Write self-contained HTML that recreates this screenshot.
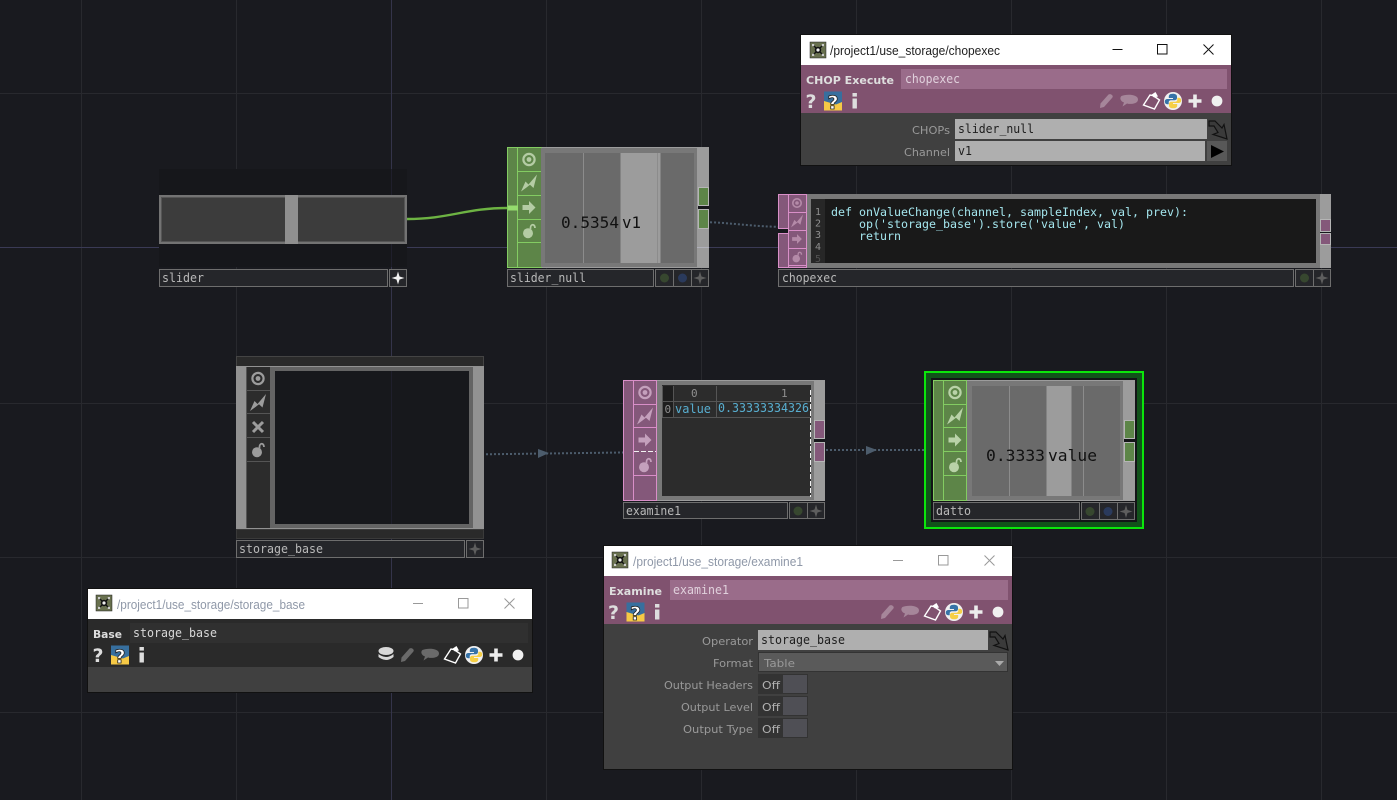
<!DOCTYPE html>
<html>
<head>
<meta charset="utf-8">
<title>use_storage</title>
<style>
html,body{margin:0;padding:0;background:#191a1f;overflow:hidden}
svg{display:block}
text{white-space:pre}
.m{font-family:"DejaVu Sans Mono","Liberation Mono",monospace;font-size:12px}
.s{font-family:"DejaVu Sans","Liberation Sans",sans-serif;font-size:11px}
.t{font-family:"Liberation Sans",sans-serif;font-size:13px}
.n{fill:#b9b9b9}
.nb{fill:#25262a;stroke:#6e6e6e;stroke-width:1}
.l{fill:#999}
.k{fill:#1d1d1d}
.code{fill:#a4e6ee;font-family:"DejaVu Sans Mono","Liberation Mono",monospace;font-size:11.5px}
.ln{fill:#8f8f8f;font-family:"DejaVu Sans Mono","Liberation Mono",monospace;font-size:10px}
.big{fill:#111;font-family:"DejaVu Sans Mono","Liberation Mono",monospace;font-size:16px}
.b{font-family:"DejaVu Sans","Liberation Sans",sans-serif;font-size:11px;font-weight:bold;fill:#dedede}
.q{font-family:"DejaVu Sans","Liberation Sans",sans-serif;font-size:19px;font-weight:bold;fill:#ddd;text-anchor:middle}
</style>
</head>
<body>
<svg xmlns="http://www.w3.org/2000/svg" width="1397" height="800" viewBox="0 0 1397 800">
<defs>
<g id="target"><circle r="5.6" fill="none" stroke="currentColor" stroke-width="2.2"/><circle r="2.4" fill="currentColor"/></g>
<path id="bolt" fill="currentColor" d="M-8 8.5 L-3.5 -1.5 L-0.5 1.5 L8 -8.5 L4.5 5 L1 1.8 L-2.5 4.5 Z"/>
<path id="arrow" fill="currentColor" d="M-6.5 -2.5 H0 V-6.5 L6.5 0 L0 6.5 V2.5 H-6.5 Z"/>
<g id="bomb"><circle cx="-1" cy="2.2" r="5" fill="currentColor"/><path d="M1.5 -2 C1 -7.5 6 -7.5 6 -3" fill="none" stroke="currentColor" stroke-width="1.8"/></g>
<path id="x" d="M-5 -5 L5 5 M5 -5 L-5 5" fill="none" stroke="currentColor" stroke-width="3"/>
<path id="star" fill="currentColor" d="M0 -6.5 L1.5 -1.5 L6.5 0 L1.5 1.5 L0 6.5 L-1.5 1.5 L-6.5 0 L-1.500 -1.5 Z"/>
<g id="tools">
<path d="M-7 7 L-6.500 2.500 L1.500 -6.500 Q3.500 -7.500 5 -6 Q6.500 -4.500 5 -3 L-3 6 Z" fill="#fff" opacity=".3"/>
<path d="M14.500 -5 C19 -7 31 -7 31 -1.500 C31 3 23 3.500 20 2.500 L15.500 5.500 L17 1.500 C13 0 12.500 -3.500 14.500 -5Z" fill="#fff" opacity=".3"/>
<path d="M36.500 4 L43 -6 L46 -5.500 L52.500 -1 L47.500 8 Z" fill="none" stroke="#fff" stroke-width="1.400"/>
<path d="M44 -6 L48.500 -9 L51 -4.500 L47 -3.500 Z" fill="#fff"/>
<circle cx="66" r="9" fill="#f0f0f0"/>
<path id="py1" d="M65.800 -7.300 C62.500 -7.300 61.800 -5.800 61.800 -4.500 V-3 H66 V-2 H60.500 C58.600 -2 57.800 -0.800 57.800 0.500 C57.800 2 58.600 3.200 60.200 3.200 H61.700 V1.200 C61.700 -0.200 62.800 -0.800 64 -0.800 H67.700 C69 -0.800 70 -1.700 70 -3 V-4.500 C70 -6.200 68.700 -7.300 65.800 -7.300Z" fill="#3673a8"/>
<path d="M65.800 -7.300 C62.500 -7.300 61.800 -5.800 61.800 -4.500 V-3 H66 V-2 H60.500 C58.600 -2 57.800 -0.800 57.800 0.500 C57.800 2 58.600 3.200 60.200 3.200 H61.700 V1.200 C61.700 -0.200 62.800 -0.800 64 -0.800 H67.700 C69 -0.800 70 -1.700 70 -3 V-4.500 C70 -6.200 68.700 -7.300 65.800 -7.300Z" fill="#f6cf45" transform="rotate(180 66 0)"/>
<path d="M81.500 0 H94.500 M88 -6.500 V6.500" stroke="#ececec" stroke-width="3.600"/>
<circle cx="110" r="5.400" fill="#f0f0f0"/>
</g>
<g id="left">
<text class="q" x="0" y="7">?</text>
<rect x="13" y="-9.500" width="18" height="19" fill="#f6c945"/>
<path d="M13 -9.500 H31 V1 L25 3.500 L13 0 Z" fill="#376f9e"/>
<text x="22" y="8" text-anchor="middle" style="font-family:'DejaVu Sans',sans-serif;font-size:19px;font-weight:bold;fill:#fff;stroke:#222;stroke-width:.8">?</text>
<rect x="41.500" y="-2.500" width="4.400" height="10" fill="#ddd"/><rect x="41.500" y="-8" width="4.400" height="3.600" fill="#ddd"/>
</g>
<g id="logo">
<rect width="16" height="16" fill="#68704e" stroke="#222" stroke-width=".5"/>
<path d="M3 3 L13 13 M13 3 L3 13" stroke="#111" stroke-width="1.300"/>
<circle cx="8" cy="8" r="3.200" fill="#111"/><circle cx="8" cy="8" r="1.600" fill="#eee"/>
<rect x="2" y="2" width="2.200" height="2.200" fill="#ccc"/><rect x="11.800" y="2" width="2.200" height="2.200" fill="#ccc"/><rect x="2" y="11.800" width="2.200" height="2.200" fill="#ccc"/><rect x="11.800" y="11.800" width="2.200" height="2.200" fill="#ccc"/>
</g>
<g id="plug"><path d="M1 1 H7 L9 3 L14 8 L16 4.500 L19 19 L5 14.500 L10 12.500 L6 6 H1 Z" fill="#3a3a3a" stroke="#111" stroke-width="1.200"/></g>
<clipPath id="cc"><rect x="811" y="199" width="505" height="64"/></clipPath>
</defs>

<!-- background -->
<rect width="1397" height="800" fill="#191a1f"/>
<g stroke="#28292e" stroke-width="1">
<path d="M81.500 0V800M236.500 0V800M546.500 0V800M701.500 0V800M856.500 0V800M1011.500 0V800M1166.500 0V800M1321.500 0V800"/>
<path d="M0 93.500H1397M0 403.500H1397M0 557.500H1397M0 712.500H1397"/>
</g>
<path d="M391.500 0V800" stroke="#34344a"/>
<path d="M0 247.500H1397" stroke="#3a3a55"/>

<!-- wires -->
<path d="M407 219 C450 219 465 208 508 208" fill="none" stroke="#6db343" stroke-width="2.400"/>
<g fill="none" stroke="#4c5c6c" stroke-width="2" stroke-dasharray="2 2">
<path d="M698 222 C730 222 750 227 790 227"/>
<path d="M470 454.500 L660 452"/>
<path d="M826 450 H970"/>
</g>
<path d="M538 449 L549 453 L538 458 Z" fill="#4c5c6c"/>
<path d="M866 446 L877 450 L866 455 Z" fill="#4c5c6c"/>

<!-- slider -->
<rect x="159" y="169" width="248" height="98" fill="#16171b"/>
<path d="M391.500 169V195M391.500 244V267" stroke="#1f1f2c"/>
<rect x="160" y="196" width="246" height="47" fill="#3c3c3c" stroke="#737373" stroke-width="2"/>
<rect x="161.500" y="197.500" width="243" height="44" fill="none" stroke="#555"/>
<rect x="285" y="195" width="13" height="49" fill="#8f8f8f"/>
<rect class="nb" x="159.500" y="269.500" width="228" height="17"/>
<rect class="nb" x="389.500" y="269.500" width="17" height="17"/>
<text class="m n" x="162" y="282" textLength="42" lengthAdjust="spacingAndGlyphs">slider</text>
<use href="#star" x="398" y="278" color="#f2f2f2"/>

<!-- slider_null -->
<rect x="507" y="147" width="202" height="121" fill="#9c9c9c"/>
<rect x="507.500" y="147.500" width="34" height="120" fill="#5d8548" stroke="#83cc62"/>
<path d="M517.500 147V268M518 171.500H541M518 195.500H541M518 219.500H541M518 242.500H541" stroke="#83cc62"/>
<rect x="541" y="148" width="156" height="119" fill="#787878"/>
<rect x="545" y="153" width="149" height="110" fill="#6a6a6a"/>
<rect x="620.500" y="153" width="40" height="110" fill="#9c9c9c"/>
<path d="M583.500 153V263M657.500 153V263" stroke="#8c8c8c"/>
<rect x="508" y="205.500" width="10" height="5" fill="#95dc6e"/>
<g color="#b4cca4"><use href="#target" x="529" y="159.500"/><use href="#bolt" x="529" y="183"/><use href="#arrow" x="529" y="207.500"/><use href="#bomb" x="529" y="231"/></g>
<text class="big" x="561" y="228" textLength="58" lengthAdjust="spacingAndGlyphs">0.5354</text>
<text class="big" x="622" y="228" textLength="19" lengthAdjust="spacingAndGlyphs">v1</text>
<rect x="698.500" y="187.500" width="10" height="18" fill="#5d8548" stroke="#b5b5b5"/>
<rect x="698" y="206" width="11" height="3" fill="#17181c"/>
<rect x="698.500" y="209.500" width="10" height="19" fill="#5d8548" stroke="#b5b5b5"/>
<rect x="697" y="247" width="12" height="1" fill="#c4c4d8" opacity=".5"/>
<rect class="nb" x="507.500" y="269.500" width="146" height="17"/>
<rect class="nb" x="655.500" y="269.500" width="53" height="17"/>
<path d="M673.500 270V287M691.500 270V287" stroke="#6e6e6e"/>
<text class="m n" x="510" y="282" textLength="76" lengthAdjust="spacingAndGlyphs">slider_null</text>
<circle cx="664.500" cy="278" r="4.500" fill="#37472f"/><circle cx="682.500" cy="278" r="4.500" fill="#2a3a5c"/>
<use href="#star" x="700" y="278" color="#5e5e5e"/>

<!-- chopexec node -->
<rect x="778" y="194" width="553" height="74" fill="#9c9c9c"/>
<rect x="778.500" y="194.500" width="28" height="73" fill="#84587a" stroke="#d98fc8"/>
<path d="M788.500 194V268M789 212.500H806M789 230.500H806M789 248.500H806M789 265.500H806" stroke="#d98fc8"/>
<rect x="778" y="229" width="10" height="4" fill="#17181c"/>
<path d="M778 228.500H788.500M778 233.500H788.500" stroke="#d98fc8"/>
<rect x="807" y="194" width="513" height="74" fill="#787878"/>
<rect x="811" y="199" width="505" height="64" fill="#191919"/>
<rect x="811" y="199" width="14" height="64" fill="#272727"/>
<g color="#b48aa8"><use href="#target" transform="translate(797 203) scale(.75)"/><use href="#bolt" transform="translate(797 221) scale(.75)"/><use href="#arrow" transform="translate(797 239) scale(.75)"/><use href="#bomb" transform="translate(797 257) scale(.75)"/></g>
<g clip-path="url(#cc)">
<text class="ln" x="815" y="215">1</text><text class="ln" x="815" y="226.500">2</text><text class="ln" x="815" y="238">3</text><text class="ln" x="815" y="250">4</text><text class="ln" x="815" y="262" opacity=".4">5</text>
<text class="code" x="831" y="216" textLength="357" lengthAdjust="spacingAndGlyphs">def onValueChange(channel, sampleIndex, val, prev):</text>
<text class="code" x="859" y="228" textLength="266" lengthAdjust="spacingAndGlyphs">op('storage_base').store('value', val)</text>
<text class="code" x="859" y="240" textLength="42" lengthAdjust="spacingAndGlyphs">return</text>
</g>
<rect x="1320.500" y="219.500" width="10" height="12" fill="#84587a" stroke="#b5b5b5"/>
<rect x="1320" y="232" width="11" height="2" fill="#17181c"/>
<rect x="1320.500" y="233.500" width="10" height="11" fill="#84587a" stroke="#b5b5b5"/>
<rect class="nb" x="778.500" y="269.500" width="515" height="17"/>
<rect class="nb" x="1295.500" y="269.500" width="35" height="17"/>
<path d="M1313.500 270V287" stroke="#6e6e6e"/>
<text class="m n" x="782" y="282" textLength="55" lengthAdjust="spacingAndGlyphs">chopexec</text>
<circle cx="1304.500" cy="278" r="4.500" fill="#37472f"/>
<use href="#star" x="1322" y="278" color="#5e5e5e"/>

<!-- storage_base -->
<rect x="236.500" y="356.500" width="247" height="10" fill="#2a2a2a" stroke="#444"/>
<rect x="236" y="366" width="248" height="163" fill="#929292"/>
<rect x="246" y="367" width="24" height="161" fill="#2c2c2c"/>
<path d="M246.500 367V528M247 390.500H270M247 413.500H270M247 437.500H270M247 461.500H270" stroke="#555"/>
<rect x="270" y="367" width="203" height="161" fill="#646464"/>
<rect x="275" y="371" width="194" height="153" fill="#17181c"/>
<path d="M391.500 371V524" stroke="#1f1f2c"/>
<g color="#9c9c9c"><use href="#target" x="258" y="378.500"/><use href="#bolt" x="258" y="402.500"/><use href="#x" x="258" y="427"/><use href="#bomb" x="258" y="450"/></g>
<rect x="236.500" y="529.500" width="247" height="9" fill="#2a2a2a" stroke="#3a3a3a"/>
<rect class="nb" x="236.500" y="540.500" width="228" height="17"/>
<rect class="nb" x="466.500" y="540.500" width="17" height="17"/>
<text class="m n" x="239" y="553" textLength="84" lengthAdjust="spacingAndGlyphs">storage_base</text>
<use href="#star" x="475" y="549" color="#5e5e5e"/>

<!-- examine1 -->
<rect x="623" y="380" width="202" height="121" fill="#9c9c9c"/>
<rect x="623.500" y="380.500" width="33" height="120" fill="#84587a" stroke="#d98fc8"/>
<path d="M633.500 380V501M634 404.500H656M634 427.500H656M634 475.500H656" stroke="#d98fc8"/>
<rect x="657" y="381" width="157" height="119" fill="#787878"/>
<rect x="662" y="385" width="149" height="111" fill="#2c2c2c"/>
<rect x="662.500" y="386" width="11" height="15" fill="#1e1e1e"/>
<rect x="662.500" y="402" width="11" height="15" fill="#1e1e1e"/>
<path d="M662 401.500H811M662 417.500H811M662.500 386V417M673.500 386V417M716.500 386V417" stroke="#555"/>
<g color="#c4a0bc"><use href="#target" x="645" y="392.500"/><use href="#bolt" x="645" y="416"/><use href="#arrow" x="645" y="440"/><use href="#bomb" x="645" y="465"/></g>
<text class="ln" x="691" y="397" style="font-size:11px" fill="#aaa">0</text>
<text class="ln" x="781" y="397" style="font-size:11px" fill="#aaa">1</text>
<text class="ln" x="664.500" y="413" style="font-size:11px" fill="#aaa">0</text>
<text class="m" x="675" y="413" fill="#58aed0" textLength="36" lengthAdjust="spacingAndGlyphs">value</text>
<text class="m" x="718" y="412" fill="#58aed0" textLength="91" lengthAdjust="spacingAndGlyphs">0.33333334326</text>
<path d="M810.500 390V497M634 451.500H656" stroke="#f2f2f2" stroke-dasharray="5 2" fill="none"/>
<rect x="814.500" y="420.500" width="10" height="18" fill="#84587a" stroke="#b5b5b5"/>
<rect x="814" y="439" width="11" height="3" fill="#17181c"/>
<rect x="814.500" y="442.500" width="10" height="19" fill="#84587a" stroke="#b5b5b5"/>
<rect class="nb" x="623.500" y="502.500" width="164" height="16"/>
<rect class="nb" x="789.500" y="502.500" width="35" height="16"/>
<path d="M807.500 503V519" stroke="#6e6e6e"/>
<text class="m n" x="626" y="515" textLength="55" lengthAdjust="spacingAndGlyphs">examine1</text>
<circle cx="798" cy="511" r="4.500" fill="#37472f"/>
<use href="#star" x="816" y="511" color="#5e5e5e"/>

<!-- datto -->
<rect x="925" y="372" width="218" height="156" fill="#11521a" stroke="#0be50b" stroke-width="2"/>
<rect x="931" y="378" width="206" height="144" fill="#131417"/>
<rect x="933" y="380" width="202" height="121" fill="#9c9c9c"/>
<rect x="933.500" y="380.500" width="33" height="120" fill="#5d8548" stroke="#83cc62"/>
<path d="M943.500 380V501M944 404.500H967M944 427.500H967M944 451.500H967M944 475.500H967" stroke="#83cc62"/>
<rect x="967" y="381" width="156" height="119" fill="#787878"/>
<rect x="972" y="386" width="148" height="110" fill="#6a6a6a"/>
<rect x="1046.500" y="386" width="25" height="110" fill="#9c9c9c"/>
<path d="M1009.500 386V496M1083.500 386V496" stroke="#8c8c8c"/>
<g color="#b9d2a8"><use href="#target" x="955" y="392.500"/><use href="#bolt" x="955" y="416"/><use href="#arrow" x="955" y="440"/><use href="#bomb" x="955" y="465"/></g>
<text class="big" x="986" y="461" textLength="59" lengthAdjust="spacingAndGlyphs">0.3333</text>
<text class="big" x="1048" y="461" textLength="49" lengthAdjust="spacingAndGlyphs">value</text>
<rect x="1124.500" y="420.500" width="10" height="18" fill="#5d8548" stroke="#b5b5b5"/>
<rect x="1124" y="439" width="11" height="3" fill="#131417"/>
<rect x="1124.500" y="442.500" width="10" height="19" fill="#5d8548" stroke="#b5b5b5"/>
<rect class="nb" x="933.500" y="502.500" width="146" height="17"/>
<rect class="nb" x="1081.500" y="502.500" width="53" height="17"/>
<path d="M1099.500 503V520M1117.500 503V520" stroke="#6e6e6e"/>
<text class="m n" x="936" y="515" textLength="35" lengthAdjust="spacingAndGlyphs">datto</text>
<circle cx="1090" cy="511.500" r="4.500" fill="#37472f"/><circle cx="1108" cy="511.500" r="4.500" fill="#2a3a5c"/>
<use href="#star" x="1126" y="511.500" color="#5e5e5e"/>

<!-- CHOP Execute window -->
<rect x="800" y="34" width="432" height="132" fill="#111"/>
<rect x="801" y="35" width="430" height="30" fill="#fff"/>
<rect x="801" y="65" width="430" height="48" fill="#80526f"/>
<rect x="801" y="113" width="430" height="52" fill="#404040"/>
<use href="#logo" x="810" y="42"/>
<text class="t" x="830" y="55" fill="#222" textLength="170" lengthAdjust="spacingAndGlyphs">/project1/use_storage/chopexec</text>
<path d="M1112.500 49.500H1122.500" stroke="#111"/><rect x="1157.500" y="44.500" width="9.500" height="9.500" fill="none" stroke="#111"/><path d="M1203.500 44.500L1213.500 54.500M1213.500 44.500L1203.500 54.500" stroke="#111"/>
<text class="b" x="806" y="84" textLength="88" lengthAdjust="spacingAndGlyphs">CHOP Execute</text>
<rect x="901" y="69" width="326" height="20" fill="#9a6c8a"/>
<text class="m" x="905" y="83" fill="#e0d0dc" textLength="55" lengthAdjust="spacingAndGlyphs">chopexec</text>
<use href="#left" x="811" y="101"/>
<use href="#tools" x="1107" y="101"/>
<text class="s l" x="912" y="134" textLength="38" lengthAdjust="spacingAndGlyphs">CHOPs</text>
<text class="s l" x="904" y="156" textLength="46" lengthAdjust="spacingAndGlyphs">Channel</text>
<rect x="955" y="119" width="252" height="20" fill="#afafaf"/>
<rect x="955" y="141" width="250" height="20" fill="#afafaf"/>
<text class="m k" x="958" y="133" textLength="76" lengthAdjust="spacingAndGlyphs">slider_null</text>
<text class="m k" x="958" y="155" textLength="14" lengthAdjust="spacingAndGlyphs">v1</text>
<use href="#plug" x="1208" y="120"/>
<rect x="1207" y="141" width="20" height="20" fill="#585858"/>
<path d="M1211 145 L1224 151.500 L1211 158 Z" fill="#000"/>

<!-- Base window -->
<rect x="87" y="588" width="446" height="105" fill="#111"/>
<rect x="88" y="589" width="444" height="30" fill="#fff"/>
<rect x="88" y="619" width="444" height="48" fill="#2a2a2a"/>
<rect x="88" y="667" width="444" height="25" fill="#404040"/>
<use href="#logo" x="96" y="595"/>
<text class="t" x="117" y="609" fill="#8f98a8" textLength="188" lengthAdjust="spacingAndGlyphs">/project1/use_storage/storage_base</text>
<path d="M413 603.500H423" stroke="#999"/><rect x="458.500" y="598.500" width="9.500" height="9.500" fill="none" stroke="#999"/><path d="M504.500 598.500L514.500 608.500M514.500 598.500L504.500 608.500" stroke="#999"/>
<text class="b" x="93" y="638" textLength="29" lengthAdjust="spacingAndGlyphs">Base</text>
<rect x="130" y="623" width="398" height="20" fill="#303030"/>
<text class="m" x="133" y="637" fill="#d8d8d8" textLength="84" lengthAdjust="spacingAndGlyphs">storage_base</text>
<use href="#left" x="98" y="655"/>
<use href="#tools" x="408" y="655"/>
<g fill="#d8d8d8"><ellipse cx="386" cy="651" rx="7.500" ry="4"/><path d="M378.500 654 Q386 660 393.500 654 V657 Q386 663 378.500 657 Z"/></g>

<!-- Examine window -->
<rect x="603" y="545" width="410" height="225" fill="#111"/>
<rect x="604" y="546" width="408" height="30" fill="#fff"/>
<rect x="604" y="576" width="408" height="48" fill="#80526f"/>
<rect x="604" y="624" width="408" height="145" fill="#404040"/>
<use href="#logo" x="612" y="552"/>
<text class="t" x="633" y="566" fill="#8f98a8" textLength="170" lengthAdjust="spacingAndGlyphs">/project1/use_storage/examine1</text>
<path d="M893 560.500H903" stroke="#999"/><rect x="938.500" y="555.500" width="9.500" height="9.500" fill="none" stroke="#999"/><path d="M984.500 555.500L994.500 565.500M994.500 555.500L984.500 565.500" stroke="#999"/>
<text class="b" x="609" y="595" textLength="53" lengthAdjust="spacingAndGlyphs">Examine</text>
<rect x="670" y="580" width="338" height="20" fill="#9a6c8a"/>
<text class="m" x="673" y="594" fill="#e0d0dc" textLength="56" lengthAdjust="spacingAndGlyphs">examine1</text>
<use href="#left" x="613.500" y="612"/>
<use href="#tools" x="888" y="612"/>
<text class="s l" x="702" y="645" textLength="51" lengthAdjust="spacingAndGlyphs">Operator</text>
<text class="s l" x="713" y="667" textLength="40" lengthAdjust="spacingAndGlyphs">Format</text>
<text class="s l" x="664" y="689" textLength="89" lengthAdjust="spacingAndGlyphs">Output Headers</text>
<text class="s l" x="681" y="711" textLength="72" lengthAdjust="spacingAndGlyphs">Output Level</text>
<text class="s l" x="683" y="733" textLength="70" lengthAdjust="spacingAndGlyphs">Output Type</text>
<rect x="758" y="630" width="230" height="20" fill="#afafaf"/>
<text class="m k" x="761" y="644" textLength="84" lengthAdjust="spacingAndGlyphs">storage_base</text>
<use href="#plug" x="989" y="631"/>
<rect x="758.500" y="652.500" width="249" height="19" fill="#5a5a5a" stroke="#333"/>
<text class="s" x="764" y="667" fill="#999" textLength="31" lengthAdjust="spacingAndGlyphs">Table</text>
<path d="M995 661 H1004 L999.500 666 Z" fill="#aaa"/>
<g>
<rect x="758" y="674" width="50" height="20" fill="#333"/><rect x="783" y="675" width="24" height="18" fill="#4f4f55"/>
<rect x="758" y="696" width="50" height="20" fill="#333"/><rect x="783" y="697" width="24" height="18" fill="#4f4f55"/>
<rect x="758" y="718" width="50" height="20" fill="#333"/><rect x="783" y="719" width="24" height="18" fill="#4f4f55"/>
</g>
<text class="s" x="762" y="689" fill="#b0b0b0" textLength="18" lengthAdjust="spacingAndGlyphs">Off</text>
<text class="s" x="762" y="711" fill="#b0b0b0" textLength="18" lengthAdjust="spacingAndGlyphs">Off</text>
<text class="s" x="762" y="733" fill="#b0b0b0" textLength="18" lengthAdjust="spacingAndGlyphs">Off</text>
</svg>
</body>
</html>
